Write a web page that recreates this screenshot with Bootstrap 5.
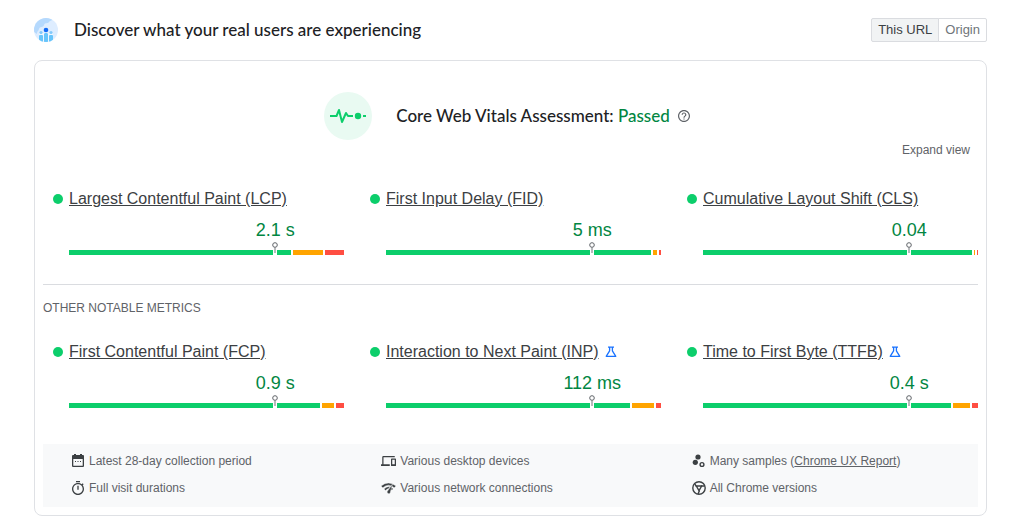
<!DOCTYPE html>
<html lang="en">
<head>
<meta charset="utf-8">
<meta name="viewport" content="width=device-width, initial-scale=1">
<title>Discover what your real users are experiencing</title>
<link href="https://cdn.jsdelivr.net/npm/bootstrap@5.3.0/dist/css/bootstrap.min.css" rel="stylesheet">
<style>
  :root { --ok: #0cce6b; --avg: #ffa400; --bad: #ff4e42; --ok-text: #018642; --line: #dadce0; --muted: #5f6368; }
  body { font-family: "Liberation Sans", Arial, sans-serif; color: #3c4043; font-size: 16px; background: #fff; }
  a { color: inherit; }
  .page { padding: 18px 37px 16px 34px; }
  .heading { font: 500 17px/24px Lato, Roboto, sans-serif; color: #202124; }
  .scope .btn { --bs-btn-padding-x: 6px; --bs-btn-padding-y: 0px; --bs-btn-font-size: 13px; --bs-btn-border-radius: 2px; --bs-btn-border-color: #dadce0; --bs-btn-color: #70757a; line-height: 22px; }
  .scope .btn.active { --bs-btn-active-bg: #f1f3f4; --bs-btn-active-color: #3c4043; --bs-btn-active-border-color: #dadce0; }
  .panel { border: 1px solid #dfe1e5; border-radius: 8px; margin-top: 18px; padding: 31px 8px 8px; }
  .assessment { padding-right: 7px; }
  .passed { color: var(--ok-text); }
  .pulse { margin-right: 24px; }
  .plain { border: 0; background: none; padding: 0; color: var(--muted); }
  .fine { font-size: 12px; line-height: 20px; color: var(--muted); }
  .expand { margin-right: 8px; }
  .metrics { display: grid; grid-template-columns: repeat(3, 1fr); column-gap: 26px; padding-left: 10px; }
  .core { margin-top: 27px; padding-bottom: 29px; border-bottom: 1px solid var(--line); }
  .notable { margin-top: 13px; }
  .other { margin-top: 22px; }
  .metric { padding-left: 16px; }
  .metric-name { line-height: 24px; margin-left: -16px; }
  .status { width: 10px; height: 10px; background: var(--ok); margin-right: 6px; }
  .flask { margin-left: 6px; }
  .value { margin: 7px 0 8px 50%; font-size: 18px; line-height: 24px; color: var(--ok-text); }
  .dist { height: 5px; gap: 2px; }
  .good { background: var(--ok); } .avg { background: var(--avg); } .poor { background: var(--bad); }
  .pin { left: 75%; bottom: 0; }
  .facts { display: grid; grid-template-columns: repeat(3, 1fr); gap: 7px 24px; margin-top: 36px; padding: 7px 0 9px 28px; background: #f8f9fa; }
  .facts svg { margin-right: 4px; fill: #3c4043; }
</style>
</head>
<body>
<svg class="d-none">
  <symbol id="pin" viewBox="0 0 6 13"><path d="M1 8h4v5H1z" fill="#fff"/><path d="M3 5.500V11" stroke="#70757a" fill="none"/><circle cx="3" cy="3" r="2.300" fill="#fff" stroke="#5f6368"/></symbol>
  <symbol id="flask" viewBox="0 0 12 12"><path d="M3 1.200h6M4.600 1.200v3.600L1.200 10.300h9.600L7.400 4.800V1.200" fill="none" stroke="#1a73ff" stroke-width="1.300" stroke-linejoin="round"/></symbol>
</svg>
<main class="page">
  <header class="d-flex align-items-center">
    <svg width="24" height="24" viewBox="0 0 24 24" aria-hidden="true">
      <clipPath id="disc"><circle cx="12" cy="12" r="12"/></clipPath>
      <g clip-path="url(#disc)">
        <path fill="#deedff" d="M0 0h24v24H0z"/>
        <path fill="#b5d9fd" d="M0 0h19c0 3-3 2-4 4s-4 0-5 3-4 1-5 4-2 2-2 5l-3-2z"/>
        <path fill="#eff6ff" d="M5 15h14v9H5z"/>
        <circle cx="7" cy="14.500" r="1.600" fill="#82c9fb"/><circle cx="17" cy="14.500" r="1.600" fill="#82c9fb"/>
        <path fill="#68c5fb" d="M5 18q0-1 1-1h2q1 0 1 1v6H5zm10 0q0-1 1-1h2q1 0 1 1v6h-4zm-5-1.500Q10 15 11 15h2q1 0 1 1.500V24h-4z"/>
        <circle cx="12" cy="12" r="2.300" fill="#126bf5"/>
      </g>
    </svg>
    <h1 class="heading mb-0 ms-3">Discover what your real users are experiencing</h1>
    <div class="btn-group scope ms-auto" role="group" aria-label="Data scope">
      <button type="button" class="btn active" aria-pressed="true">This URL</button>
      <button type="button" class="btn" aria-pressed="false">Origin</button>
    </div>
  </header>

  <section class="panel">
    <div class="assessment d-flex justify-content-center align-items-center">
      <svg class="pulse" width="48" height="48" viewBox="0 0 48 48" aria-hidden="true">
        <circle cx="24" cy="24" r="24" fill="#e9faf2"/>
        <path d="M6 24h6.500L15 18l3 12 4-9 2 3h5" fill="none" stroke="#0cce6b" stroke-width="2" stroke-linejoin="round"/>
        <circle cx="34" cy="24" r="3.200" fill="#0cce6b"/><path d="M39 24h3" stroke="#0cce6b" stroke-width="2"/>
      </svg>
      <h2 class="heading mb-0">Core Web Vitals Assessment: <span class="passed">Passed</span></h2>
      <button type="button" class="plain d-flex ms-2" aria-label="About this assessment">
        <svg width="12" height="12" viewBox="2 2 20 20" fill="#5f6368"><path d="M11 18h2v-2h-2v2zm1-16C6.480 2 2 6.480 2 12s4.480 10 10 10 10-4.480 10-10S17.520 2 12 2zm0 18c-4.410 0-8-3.590-8-8s3.590-8 8-8 8 3.590 8 8-3.590 8-8 8zm0-14c-2.210 0-4 1.790-4 4h2c0-1.100.9-2 2-2s2 .9 2 2c0 2-3 1.750-3 5h2c0-2.250 3-2.500 3-5 0-2.210-1.790-4-4-4z"/></svg>
      </button>
    </div>
    <div class="d-flex justify-content-end"><button type="button" class="plain fine expand">Expand view</button></div>

    <div class="metrics core">
      <article class="metric">
        <div class="metric-name d-flex align-items-center"><span class="status rounded-circle"></span><a href="#lcp">Largest Contentful Paint (LCP)</a></div>
        <div class="value text-center">2.1 s</div>
        <div class="dist d-flex position-relative"><div class="good" style="flex-grow:223"></div><div class="avg" style="flex-grow:30"></div><div class="poor" style="flex-grow:19"></div><svg class="pin position-absolute translate-middle-x" width="6" height="13"><use href="#pin"/></svg></div>
      </article>
      <article class="metric">
        <div class="metric-name d-flex align-items-center"><span class="status rounded-circle"></span><a href="#fid">First Input Delay (FID)</a></div>
        <div class="value text-center">5 ms</div>
        <div class="dist d-flex position-relative"><div class="good" style="flex-grow:267"></div><div class="avg" style="flex-grow:4"></div><div class="poor" style="flex-grow:2"></div><svg class="pin position-absolute translate-middle-x" width="6" height="13"><use href="#pin"/></svg></div>
      </article>
      <article class="metric">
        <div class="metric-name d-flex align-items-center"><span class="status rounded-circle"></span><a href="#cls">Cumulative Layout Shift (CLS)</a></div>
        <div class="value text-center">0.04</div>
        <div class="dist d-flex position-relative"><div class="good" style="flex-grow:271"></div><div class="avg" style="flex-grow:1"></div><div class="poor" style="flex-grow:1"></div><svg class="pin position-absolute translate-middle-x" width="6" height="13"><use href="#pin"/></svg></div>
      </article>
    </div>

    <h3 class="fine notable text-uppercase fw-normal mb-0">Other notable metrics</h3>
    <div class="metrics other">
      <article class="metric">
        <div class="metric-name d-flex align-items-center"><span class="status rounded-circle"></span><a href="#fcp">First Contentful Paint (FCP)</a></div>
        <div class="value text-center">0.9 s</div>
        <div class="dist d-flex position-relative"><div class="good" style="flex-grow:252"></div><div class="avg" style="flex-grow:12"></div><div class="poor" style="flex-grow:8"></div><svg class="pin position-absolute translate-middle-x" width="6" height="13"><use href="#pin"/></svg></div>
      </article>
      <article class="metric">
        <div class="metric-name d-flex align-items-center"><span class="status rounded-circle"></span><a href="#inp">Interaction to Next Paint (INP)</a><svg class="flask" width="12" height="12"><use href="#flask"/></svg></div>
        <div class="value text-center">112 ms</div>
        <div class="dist d-flex position-relative"><div class="good" style="flex-grow:246"></div><div class="avg" style="flex-grow:22"></div><div class="poor" style="flex-grow:5"></div><svg class="pin position-absolute translate-middle-x" width="6" height="13"><use href="#pin"/></svg></div>
      </article>
      <article class="metric">
        <div class="metric-name d-flex align-items-center"><span class="status rounded-circle"></span><a href="#ttfb">Time to First Byte (TTFB)</a><svg class="flask" width="12" height="12"><use href="#flask"/></svg></div>
        <div class="value text-center">0.4 s</div>
        <div class="dist d-flex position-relative"><div class="good" style="flex-grow:249"></div><div class="avg" style="flex-grow:17"></div><div class="poor" style="flex-grow:6"></div><svg class="pin position-absolute translate-middle-x" width="6" height="13"><use href="#pin"/></svg></div>
      </article>
    </div>

    <div class="facts fine">
      <div class="d-flex align-items-center"><svg width="14" height="14" viewBox="0 0 14 14"><path fill-rule="evenodd" d="M3 0h2v1h4V0h2v1h1q1 0 1 1v10q0 1-1 1H2q-1 0-1-1V2q0-1 1-1h1zM2.300 5v6.700h9.400V5z"/><path d="M4 7h1v1H4zm2.500 0h1v1h-1zM9 7h1v1H9z"/></svg>Latest 28-day collection period</div>
      <div class="d-flex align-items-center"><svg width="15" height="14" viewBox="0 3 24 18"><path d="M4 6h18V4H4c-1.100 0-2 .9-2 2v11H0v3h14v-3H4V6zm19 2h-6c-.55 0-1 .45-1 1v10c0 .55.45 1 1 1h6c.55 0 1-.45 1-1V9c0-.55-.45-1-1-1zm-1 9h-4v-7h4v7z"/></svg>Various desktop devices</div>
      <div class="d-flex align-items-center"><svg width="14" height="14" viewBox="0 0 14 14"><circle cx="6" cy="3" r="2.600"/><circle cx="3.300" cy="8.300" r="2.600"/><circle cx="10" cy="10.500" r="1.900" fill="none" stroke="#3c4043" stroke-width="1.400"/></svg><span>Many samples (<a href="#crux">Chrome UX Report</a>)</span></div>
      <div class="d-flex align-items-center"><svg width="14" height="14" viewBox="2 1 20 21"><path d="M15 1H9v2h6V1zm-4 13h2V8h-2v6zm8.030-6.610l1.420-1.420c-.43-.51-.9-.99-1.410-1.410l-1.420 1.420C16.070 4.740 14.120 4 12 4c-4.970 0-9 4.030-9 9s4.020 9 9 9 9-4.030 9-9c0-2.120-.74-4.070-1.970-5.610zM12 20c-3.870 0-7-3.130-7-7s3.130-7 7-7 7 3.130 7 7-3.130 7-7 7z"/></svg>Full visit durations</div>
      <div class="d-flex align-items-center"><svg width="15" height="14" viewBox="0 0 15 14"><path d="M0 5Q7.500-1 15 5l-1.800 1.800Q7.500 1.500 1.800 6.800zM3 8q3-3 6-2.200L8 7.500Q6 7.500 4.700 9.500zM11.500 3L9.300 11.500A1.600 1.600 0 0 1 6.200 10.600z" stroke="#f8f9fa" stroke-width=".4"/><path d="M10.500 6.500L12 8l-1.500 1.200z"/></svg>Various network connections</div>
      <div class="d-flex align-items-center"><svg width="14" height="14" viewBox="0 0 14 14"><g fill="none" stroke="#3c4043" stroke-width="1.400"><circle cx="7" cy="7" r="6.200"/><path d="M4.300 5h5.400L7 9.700z" stroke-linejoin="round"/><path d="M9 5h3.700M4.300 5.500L3 3.200M7.500 9.500L6 13"/></g></svg>All Chrome versions</div>
    </div>
  </section>
</main>
<script src="https://cdn.jsdelivr.net/npm/bootstrap@5.3.0/dist/js/bootstrap.bundle.min.js"></script>
</body>
</html>
